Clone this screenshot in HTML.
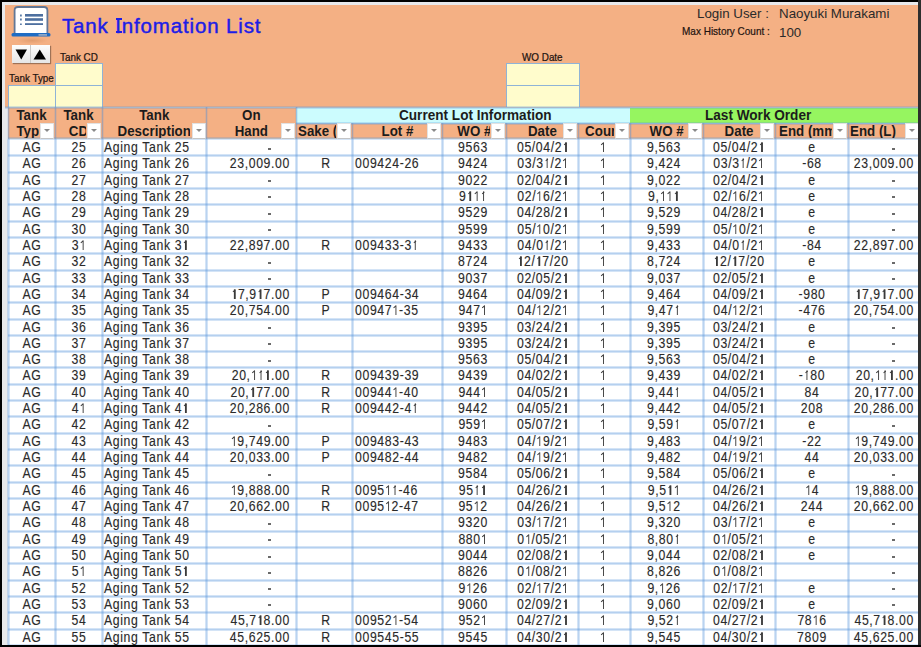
<!DOCTYPE html><html><head><meta charset="utf-8"><style>

*{margin:0;padding:0;box-sizing:border-box}
html,body{width:921px;height:647px;overflow:hidden;background:#000}
body{position:relative;font-family:"Liberation Sans",sans-serif;color:#222}
.a{position:absolute}
.t{position:absolute;white-space:pre;font-size:13.33px;line-height:15px;height:15px;transform:scaleY(1.06);transform-origin:0 12px}
.d{letter-spacing:.68px;transform:scale(.92,1.07);color:#2a2a2a;text-shadow:0 0 .8px rgba(60,60,80,.25)}
.one{display:inline-block;width:7.41px;height:9.6px;position:relative}.one:before{content:'';position:absolute;left:3.4px;top:0.3px;width:1.3px;height:9.7px;background:#3a3a3a}.one:after{content:'';position:absolute;left:0.9px;top:0.4px;width:3.3px;height:1.25px;background:#3a3a3a;transform:rotate(-36deg);transform-origin:100% 0}
.d.l{transform-origin:0 12px}.d.c{transform-origin:50% 12px}.d.r{transform-origin:100% 12px}
.b{font-weight:bold;color:#1c1c1c;transform:scaleY(1.03)}
.c{text-align:center}
.rt{text-align:right}
.vl{position:absolute;width:1px;background:rgba(90,150,220,.42);box-shadow:-1px 0 0 rgba(90,150,220,.26),1px 0 0 rgba(90,150,220,.26)}
.hl{position:absolute;height:1px;background:rgba(90,150,220,.45);box-shadow:0 -1px 0 rgba(90,150,220,.26),0 1px 0 rgba(90,150,220,.26)}
.dd{position:absolute;width:14px;background:#fff;border:1px solid #e2e2e2;border-bottom-color:#c4c4c4}
.dd:after{content:"";position:absolute;left:3px;top:5px;border-left:3px solid transparent;border-right:3px solid transparent;border-top:3px solid #8a8a8a}

</style></head><body><div id="w" style="position:absolute;left:0;top:0;width:921px;height:647px">
<div class="a" style="left:2px;top:2px;width:916px;height:643px;background:#e8e9eb"></div>
<div class="a" style="left:5px;top:5px;width:913px;height:102px;background:#f4b084"></div>
<div class="a" style="left:8px;top:139px;width:910px;height:506px;background:#fff"></div>
<div class="a" style="left:16px;top:37px;width:32px;height:7px;background:radial-gradient(ellipse at center,rgba(160,90,40,.22),rgba(160,90,40,0) 70%)"></div>
<svg class="a" style="left:10px;top:4px" width="44" height="40" viewBox="0 0 44 40">
<path d="M4.6 29.5 V6.5 Q4.6 3 8 3 H34 Q37.4 3 37.4 6.5 V29.5" fill="#fff" stroke="#627796" stroke-width="1.8"/>
<rect x="10" y="10.5" width="1.8" height="2" fill="#5b7da8"/>
<rect x="10" y="14.5" width="1.8" height="2" fill="#5b7da8"/>
<rect x="10" y="19.5" width="1.8" height="1.5" fill="#5b7da8"/>
<rect x="15" y="10" width="18" height="2.6" fill="#4d6f9f"/>
<rect x="15" y="14.2" width="18" height="2.6" fill="#4d6f9f"/>
<rect x="15" y="19.2" width="18" height="1.8" fill="#4d6f9f"/>
<rect x="1.5" y="29" width="39" height="3.6" rx="1.5" fill="#1f6cc4"/>
<rect x="28.5" y="30" width="8.5" height="1.8" fill="#8ea6c4"/>
</svg>
<div class="a" style="left:62px;top:14px;font-size:20.5px;line-height:24px;font-weight:normal;letter-spacing:0.85px;-webkit-text-stroke:0.45px #1d1de6;color:#1d1de6;white-space:pre">Tank Infomation List</div>
<div class="a" style="left:116.3px;top:18.2px;width:5.6px;height:1.7px;background:#1d1de6"></div><div class="a" style="left:116.3px;top:31.3px;width:5.6px;height:1.7px;background:#1d1de6"></div>
<div class="a" style="left:697px;top:5.7px;font-size:13.33px;line-height:15px;color:#2a2a2a;white-space:pre">Login User :</div>
<div class="a" style="left:779px;top:5.7px;font-size:13.33px;line-height:15px;color:#2a2a2a;white-space:pre">Naoyuki Murakami</div>
<div class="a" style="left:682px;top:26px;font-size:10px;line-height:12px;color:#1f1410;-webkit-text-stroke:0.2px #1f1410;white-space:pre;transform:scaleY(1.12);transform-origin:0 10px">Max History Count :</div>
<div class="a" style="left:779px;top:25px;font-size:13.33px;line-height:15px;color:#2a2a2a;white-space:pre">100</div>
<div class="a" style="left:12px;top:45px;width:38px;height:18px;background:linear-gradient(#fdfdfd,#e6e6e6);box-shadow:1px 1px 1px rgba(0,0,0,.35)"></div>
<div class="a" style="left:30px;top:45px;width:1px;height:18px;background:#c9c9c9"></div>
<svg class="a" style="left:11px;top:45px" width="40" height="19" viewBox="0 0 40 19"><path d="M4.5 4.5 H16 L10.25 14.5 Z" fill="#000"/><path d="M22.5 14.5 H35 L28.75 4.5 Z" fill="#000"/></svg>
<div class="a" style="left:60px;top:51.6px;font-size:9.9px;line-height:12px;color:#1f1410;-webkit-text-stroke:0.22px #1f1410;white-space:pre;transform:scaleY(1.12);transform-origin:0 9.4px">Tank CD</div>
<div class="a" style="left:9px;top:72.6px;font-size:9.9px;line-height:12px;color:#1f1410;-webkit-text-stroke:0.22px #1f1410;white-space:pre;transform:scaleY(1.12);transform-origin:0 9.4px">Tank Type</div>
<div class="a" style="left:522px;top:51.6px;font-size:9.9px;line-height:12px;color:#1f1410;-webkit-text-stroke:0.22px #1f1410;white-space:pre;transform:scaleY(1.12);transform-origin:0 9.4px">WO Date</div>
<div class="a" style="left:55px;top:63px;width:48px;height:23px;background:#fffccc;border:1px solid #8fb3d6"></div>
<div class="a" style="left:55px;top:85px;width:48px;height:23px;background:#fffccc;border:1px solid #8fb3d6"></div>
<div class="a" style="left:8px;top:85px;width:48px;height:23px;background:#fffccc;border:1px solid #8fb3d6"></div>
<div class="a" style="left:506px;top:63px;width:74px;height:23px;background:#fffccc;border:1px solid #8fb3d6"></div>
<div class="a" style="left:506px;top:85px;width:74px;height:23px;background:#fffccc;border:1px solid #8fb3d6"></div>
<div class="a" style="left:8px;top:107px;width:47px;height:32px;background:#f4b084"></div>
<div class="a" style="left:55px;top:107px;width:47px;height:32px;background:#f4b084"></div>
<div class="a" style="left:102px;top:107px;width:104px;height:32px;background:#f4b084"></div>
<div class="a" style="left:206px;top:107px;width:90px;height:32px;background:#f4b084"></div>
<div class="a" style="left:296px;top:107px;width:334px;height:16px;background:#ccfcfe"></div>
<div class="a" style="left:630px;top:107px;width:290px;height:16px;background:#96f560"></div>
<div class="a" style="left:296px;top:123px;width:56px;height:16px;background:#f4b084"></div>
<div class="a" style="left:352px;top:123px;width:90px;height:16px;background:#f4b084"></div>
<div class="a" style="left:442px;top:123px;width:64px;height:16px;background:#f4b084"></div>
<div class="a" style="left:506px;top:123px;width:72px;height:16px;background:#f4b084"></div>
<div class="a" style="left:578px;top:123px;width:52px;height:16px;background:#f4b084"></div>
<div class="a" style="left:630px;top:123px;width:73px;height:16px;background:#f4b084"></div>
<div class="a" style="left:703px;top:123px;width:72px;height:16px;background:#f4b084"></div>
<div class="a" style="left:775px;top:123px;width:73px;height:16px;background:#f4b084"></div>
<div class="a" style="left:848px;top:123px;width:72px;height:16px;background:#f4b084"></div>
<div class="hl" style="left:5px;top:107px;width:913px;background:#a9b7c8"></div>
<div class="hl" style="left:296px;top:123px;width:622px;background:#8fb3d6"></div>
<div class="hl" style="left:8px;top:138px;width:910px;background:#b5b8bd"></div>
<div class="dd" style="left:40px;top:123px;height:16px"></div>
<div class="dd" style="left:87px;top:123px;height:16px"></div>
<div class="dd" style="left:192px;top:123px;height:16px"></div>
<div class="dd" style="left:281px;top:123px;height:16px"></div>
<div class="dd" style="left:337px;top:123px;height:16px"></div>
<div class="dd" style="left:427px;top:123px;height:16px"></div>
<div class="dd" style="left:491px;top:123px;height:16px"></div>
<div class="dd" style="left:563px;top:123px;height:16px"></div>
<div class="dd" style="left:615px;top:123px;height:16px"></div>
<div class="dd" style="left:688px;top:123px;height:16px"></div>
<div class="dd" style="left:760px;top:123px;height:16px"></div>
<div class="dd" style="left:833px;top:123px;height:16px"></div>
<div class="dd" style="left:905px;top:123px;height:16px"></div>
<div class="t b" style="left:-68.50px;top:107.70px;width:200.00px;text-align:center;">Tank</div>
<div class="a" style="left:9px;top:123px;width:30px;height:15px;overflow:hidden">
<div class="t b" style="left:-77.50px;top:0.80px;width:200px;text-align:center">Type</div></div>
<div class="t b" style="left:-21.50px;top:107.70px;width:200.00px;text-align:center;">Tank</div>
<div class="a" style="left:56px;top:123px;width:30px;height:15px;overflow:hidden">
<div class="t b" style="left:-77.50px;top:0.80px;width:200px;text-align:center">CD</div></div>
<div class="t b" style="left:54.25px;top:107.70px;width:200.00px;text-align:center;">Tank</div>
<div class="a" style="left:103px;top:123px;width:87px;height:15px;overflow:hidden">
<div class="t b" style="left:-48.75px;top:0.80px;width:200px;text-align:center">Description</div></div>
<div class="t b" style="left:151.35px;top:107.70px;width:200.00px;text-align:center;">On</div>
<div class="a" style="left:207px;top:123px;width:73px;height:15px;overflow:hidden">
<div class="t b" style="left:-55.65px;top:0.80px;width:200px;text-align:center">Hand</div></div>
<div class="t b" style="left:399px;top:107.7px;font-size:13.6px">Current Lot Information</div>
<div class="t b" style="left:705px;top:107.7px;font-size:13.6px">Last Work Order</div>
<div class="a" style="left:297px;top:123px;width:39px;height:15px;overflow:hidden">
<div class="t b" style="left:1.00px;top:0.80px">Sake (Class)</div></div>
<div class="a" style="left:353px;top:123px;width:73px;height:15px;overflow:hidden">
<div class="t b" style="left:-55.60px;top:0.80px;width:200px;text-align:center">Lot #</div></div>
<div class="a" style="left:443px;top:123px;width:47px;height:15px;overflow:hidden">
<div class="t b" style="left:-68.65px;top:0.80px;width:200px;text-align:center">WO #</div></div>
<div class="a" style="left:507px;top:123px;width:55px;height:15px;overflow:hidden">
<div class="t b" style="left:-64.65px;top:0.80px;width:200px;text-align:center">Date</div></div>
<div class="a" style="left:579px;top:123px;width:35px;height:15px;overflow:hidden">
<div class="t b" style="left:-74.65px;top:0.80px;width:200px;text-align:center">Count</div></div>
<div class="a" style="left:631px;top:123px;width:56px;height:15px;overflow:hidden">
<div class="t b" style="left:-64.40px;top:0.80px;width:200px;text-align:center">WO #</div></div>
<div class="a" style="left:704px;top:123px;width:55px;height:15px;overflow:hidden">
<div class="t b" style="left:-64.95px;top:0.80px;width:200px;text-align:center">Date</div></div>
<div class="a" style="left:776px;top:123px;width:56px;height:15px;overflow:hidden">
<div class="t b" style="left:3.00px;top:0.80px">End (mm)</div></div>
<div class="a" style="left:849px;top:123px;width:55px;height:15px;overflow:hidden">
<div class="t b" style="left:1.00px;top:0.80px">End (L)</div></div>
<div class="hl" style="left:8px;top:155px;width:910px"></div>
<div class="hl" style="left:8px;top:172px;width:910px"></div>
<div class="hl" style="left:8px;top:188px;width:910px"></div>
<div class="hl" style="left:8px;top:204px;width:910px"></div>
<div class="hl" style="left:8px;top:221px;width:910px"></div>
<div class="hl" style="left:8px;top:237px;width:910px"></div>
<div class="hl" style="left:8px;top:253px;width:910px"></div>
<div class="hl" style="left:8px;top:270px;width:910px"></div>
<div class="hl" style="left:8px;top:286px;width:910px"></div>
<div class="hl" style="left:8px;top:302px;width:910px"></div>
<div class="hl" style="left:8px;top:319px;width:910px"></div>
<div class="hl" style="left:8px;top:335px;width:910px"></div>
<div class="hl" style="left:8px;top:351px;width:910px"></div>
<div class="hl" style="left:8px;top:367px;width:910px"></div>
<div class="hl" style="left:8px;top:384px;width:910px"></div>
<div class="hl" style="left:8px;top:400px;width:910px"></div>
<div class="hl" style="left:8px;top:416px;width:910px"></div>
<div class="hl" style="left:8px;top:433px;width:910px"></div>
<div class="hl" style="left:8px;top:449px;width:910px"></div>
<div class="hl" style="left:8px;top:465px;width:910px"></div>
<div class="hl" style="left:8px;top:482px;width:910px"></div>
<div class="hl" style="left:8px;top:498px;width:910px"></div>
<div class="hl" style="left:8px;top:514px;width:910px"></div>
<div class="hl" style="left:8px;top:531px;width:910px"></div>
<div class="hl" style="left:8px;top:547px;width:910px"></div>
<div class="hl" style="left:8px;top:563px;width:910px"></div>
<div class="hl" style="left:8px;top:580px;width:910px"></div>
<div class="hl" style="left:8px;top:596px;width:910px"></div>
<div class="hl" style="left:8px;top:612px;width:910px"></div>
<div class="hl" style="left:8px;top:629px;width:910px"></div>
<div class="hl" style="left:8px;top:645px;width:910px"></div>
<div class="vl" style="left:8px;top:139px;height:506px"></div>
<div class="vl" style="left:55px;top:139px;height:506px"></div>
<div class="vl" style="left:102px;top:139px;height:506px"></div>
<div class="vl" style="left:206px;top:139px;height:506px"></div>
<div class="vl" style="left:296px;top:139px;height:506px"></div>
<div class="vl" style="left:352px;top:139px;height:506px"></div>
<div class="vl" style="left:442px;top:139px;height:506px"></div>
<div class="vl" style="left:506px;top:139px;height:506px"></div>
<div class="vl" style="left:578px;top:139px;height:506px"></div>
<div class="vl" style="left:630px;top:139px;height:506px"></div>
<div class="vl" style="left:703px;top:139px;height:506px"></div>
<div class="vl" style="left:775px;top:139px;height:506px"></div>
<div class="vl" style="left:848px;top:139px;height:506px"></div>
<div class="vl" style="left:8px;top:107px;height:32px;background:rgba(110,150,200,.55);box-shadow:-1px 0 0 rgba(110,150,200,.15),1px 0 0 rgba(110,150,200,.15)"></div>
<div class="vl" style="left:55px;top:107px;height:32px;background:rgba(110,150,200,.55);box-shadow:-1px 0 0 rgba(110,150,200,.15),1px 0 0 rgba(110,150,200,.15)"></div>
<div class="vl" style="left:102px;top:107px;height:32px;background:rgba(110,150,200,.55);box-shadow:-1px 0 0 rgba(110,150,200,.15),1px 0 0 rgba(110,150,200,.15)"></div>
<div class="vl" style="left:206px;top:107px;height:32px;background:rgba(110,150,200,.55);box-shadow:-1px 0 0 rgba(110,150,200,.15),1px 0 0 rgba(110,150,200,.15)"></div>
<div class="vl" style="left:296px;top:107px;height:32px;background:rgba(110,150,200,.55);box-shadow:-1px 0 0 rgba(110,150,200,.15),1px 0 0 rgba(110,150,200,.15)"></div>
<div class="vl" style="left:352px;top:123px;height:16px;background:rgba(110,150,200,.55);box-shadow:-1px 0 0 rgba(110,150,200,.15),1px 0 0 rgba(110,150,200,.15)"></div>
<div class="vl" style="left:442px;top:123px;height:16px;background:rgba(110,150,200,.55);box-shadow:-1px 0 0 rgba(110,150,200,.15),1px 0 0 rgba(110,150,200,.15)"></div>
<div class="vl" style="left:506px;top:123px;height:16px;background:rgba(110,150,200,.55);box-shadow:-1px 0 0 rgba(110,150,200,.15),1px 0 0 rgba(110,150,200,.15)"></div>
<div class="vl" style="left:578px;top:123px;height:16px;background:rgba(110,150,200,.55);box-shadow:-1px 0 0 rgba(110,150,200,.15),1px 0 0 rgba(110,150,200,.15)"></div>
<div class="vl" style="left:630px;top:123px;height:16px;background:rgba(110,150,200,.55);box-shadow:-1px 0 0 rgba(110,150,200,.15),1px 0 0 rgba(110,150,200,.15)"></div>
<div class="vl" style="left:703px;top:123px;height:16px;background:rgba(110,150,200,.55);box-shadow:-1px 0 0 rgba(110,150,200,.15),1px 0 0 rgba(110,150,200,.15)"></div>
<div class="vl" style="left:775px;top:123px;height:16px;background:rgba(110,150,200,.55);box-shadow:-1px 0 0 rgba(110,150,200,.15),1px 0 0 rgba(110,150,200,.15)"></div>
<div class="vl" style="left:848px;top:123px;height:16px;background:rgba(110,150,200,.55);box-shadow:-1px 0 0 rgba(110,150,200,.15),1px 0 0 rgba(110,150,200,.15)"></div>
<div class="t d c" style="left:-68.16px;top:140.00px;width:200px;text-align:center">AG</div>
<div class="t d c" style="left:-21.16px;top:140.00px;width:200px;text-align:center">25</div>
<div class="t d l" style="left:104.00px;top:140.00px">Aging Tank 25</div>
<div class="a" style="left:268px;top:148px;width:3px;height:2px;background:#6a6a6a"></div>
<div class="t d c" style="left:372.74px;top:140.00px;width:200px;text-align:center">9563</div>
<div class="t d c" style="left:442.74px;top:140.00px;width:200px;text-align:center">05/04/2<span class="one"></span></div>
<div class="t d c" style="left:503.04px;top:140.00px;width:200px;text-align:center"><span class="one"></span></div>
<div class="t d c" style="left:564.04px;top:140.00px;width:200px;text-align:center">9,563</div>
<div class="t d c" style="left:638.84px;top:140.00px;width:200px;text-align:center">05/04/2<span class="one"></span></div>
<div class="t d c" style="left:712.34px;top:140.00px;width:200px;text-align:center">e</div>
<div class="a" style="left:892px;top:148px;width:3px;height:2px;background:#6a6a6a"></div>
<div class="t d c" style="left:-68.16px;top:156.32px;width:200px;text-align:center">AG</div>
<div class="t d c" style="left:-21.16px;top:156.32px;width:200px;text-align:center">26</div>
<div class="t d l" style="left:104.00px;top:156.32px">Aging Tank 26</div>
<div class="t d r" style="left:190.28px;top:156.32px;width:100px;text-align:right">23,009.00</div>
<div class="t d c" style="left:225.54px;top:156.32px;width:200px;text-align:center">R</div>
<div class="t d l" style="left:354.50px;top:156.32px">009424-26</div>
<div class="t d c" style="left:372.74px;top:156.32px;width:200px;text-align:center">9424</div>
<div class="t d c" style="left:442.74px;top:156.32px;width:200px;text-align:center">03/3<span class="one"></span>/2<span class="one"></span></div>
<div class="t d c" style="left:503.04px;top:156.32px;width:200px;text-align:center"><span class="one"></span></div>
<div class="t d c" style="left:564.04px;top:156.32px;width:200px;text-align:center">9,424</div>
<div class="t d c" style="left:638.84px;top:156.32px;width:200px;text-align:center">03/3<span class="one"></span>/2<span class="one"></span></div>
<div class="t d c" style="left:712.34px;top:156.32px;width:200px;text-align:center">-68</div>
<div class="t d r" style="left:814.18px;top:156.32px;width:100px;text-align:right">23,009.00</div>
<div class="t d c" style="left:-68.16px;top:172.64px;width:200px;text-align:center">AG</div>
<div class="t d c" style="left:-21.16px;top:172.64px;width:200px;text-align:center">27</div>
<div class="t d l" style="left:104.00px;top:172.64px">Aging Tank 27</div>
<div class="a" style="left:268px;top:180px;width:3px;height:2px;background:#6a6a6a"></div>
<div class="t d c" style="left:372.74px;top:172.64px;width:200px;text-align:center">9022</div>
<div class="t d c" style="left:442.74px;top:172.64px;width:200px;text-align:center">02/04/2<span class="one"></span></div>
<div class="t d c" style="left:503.04px;top:172.64px;width:200px;text-align:center"><span class="one"></span></div>
<div class="t d c" style="left:564.04px;top:172.64px;width:200px;text-align:center">9,022</div>
<div class="t d c" style="left:638.84px;top:172.64px;width:200px;text-align:center">02/04/2<span class="one"></span></div>
<div class="t d c" style="left:712.34px;top:172.64px;width:200px;text-align:center">e</div>
<div class="a" style="left:892px;top:180px;width:3px;height:2px;background:#6a6a6a"></div>
<div class="t d c" style="left:-68.16px;top:188.96px;width:200px;text-align:center">AG</div>
<div class="t d c" style="left:-21.16px;top:188.96px;width:200px;text-align:center">28</div>
<div class="t d l" style="left:104.00px;top:188.96px">Aging Tank 28</div>
<div class="a" style="left:268px;top:196px;width:3px;height:2px;background:#6a6a6a"></div>
<div class="t d c" style="left:372.74px;top:188.96px;width:200px;text-align:center">9<span class="one"></span><span class="one"></span><span class="one"></span></div>
<div class="t d c" style="left:442.74px;top:188.96px;width:200px;text-align:center">02/<span class="one"></span>6/2<span class="one"></span></div>
<div class="t d c" style="left:503.04px;top:188.96px;width:200px;text-align:center"><span class="one"></span></div>
<div class="t d c" style="left:564.04px;top:188.96px;width:200px;text-align:center">9,<span class="one"></span><span class="one"></span><span class="one"></span></div>
<div class="t d c" style="left:638.84px;top:188.96px;width:200px;text-align:center">02/<span class="one"></span>6/2<span class="one"></span></div>
<div class="t d c" style="left:712.34px;top:188.96px;width:200px;text-align:center">e</div>
<div class="a" style="left:892px;top:196px;width:3px;height:2px;background:#6a6a6a"></div>
<div class="t d c" style="left:-68.16px;top:205.28px;width:200px;text-align:center">AG</div>
<div class="t d c" style="left:-21.16px;top:205.28px;width:200px;text-align:center">29</div>
<div class="t d l" style="left:104.00px;top:205.28px">Aging Tank 29</div>
<div class="a" style="left:268px;top:213px;width:3px;height:2px;background:#6a6a6a"></div>
<div class="t d c" style="left:372.74px;top:205.28px;width:200px;text-align:center">9529</div>
<div class="t d c" style="left:442.74px;top:205.28px;width:200px;text-align:center">04/28/2<span class="one"></span></div>
<div class="t d c" style="left:503.04px;top:205.28px;width:200px;text-align:center"><span class="one"></span></div>
<div class="t d c" style="left:564.04px;top:205.28px;width:200px;text-align:center">9,529</div>
<div class="t d c" style="left:638.84px;top:205.28px;width:200px;text-align:center">04/28/2<span class="one"></span></div>
<div class="t d c" style="left:712.34px;top:205.28px;width:200px;text-align:center">e</div>
<div class="a" style="left:892px;top:213px;width:3px;height:2px;background:#6a6a6a"></div>
<div class="t d c" style="left:-68.16px;top:221.60px;width:200px;text-align:center">AG</div>
<div class="t d c" style="left:-21.16px;top:221.60px;width:200px;text-align:center">30</div>
<div class="t d l" style="left:104.00px;top:221.60px">Aging Tank 30</div>
<div class="a" style="left:268px;top:229px;width:3px;height:2px;background:#6a6a6a"></div>
<div class="t d c" style="left:372.74px;top:221.60px;width:200px;text-align:center">9599</div>
<div class="t d c" style="left:442.74px;top:221.60px;width:200px;text-align:center">05/<span class="one"></span>0/2<span class="one"></span></div>
<div class="t d c" style="left:503.04px;top:221.60px;width:200px;text-align:center"><span class="one"></span></div>
<div class="t d c" style="left:564.04px;top:221.60px;width:200px;text-align:center">9,599</div>
<div class="t d c" style="left:638.84px;top:221.60px;width:200px;text-align:center">05/<span class="one"></span>0/2<span class="one"></span></div>
<div class="t d c" style="left:712.34px;top:221.60px;width:200px;text-align:center">e</div>
<div class="a" style="left:892px;top:229px;width:3px;height:2px;background:#6a6a6a"></div>
<div class="t d c" style="left:-68.16px;top:237.92px;width:200px;text-align:center">AG</div>
<div class="t d c" style="left:-21.16px;top:237.92px;width:200px;text-align:center">3<span class="one"></span></div>
<div class="t d l" style="left:104.00px;top:237.92px">Aging Tank 3<span class="one"></span></div>
<div class="t d r" style="left:190.28px;top:237.92px;width:100px;text-align:right">22,897.00</div>
<div class="t d c" style="left:225.54px;top:237.92px;width:200px;text-align:center">R</div>
<div class="t d l" style="left:354.50px;top:237.92px">009433-3<span class="one"></span></div>
<div class="t d c" style="left:372.74px;top:237.92px;width:200px;text-align:center">9433</div>
<div class="t d c" style="left:442.74px;top:237.92px;width:200px;text-align:center">04/0<span class="one"></span>/2<span class="one"></span></div>
<div class="t d c" style="left:503.04px;top:237.92px;width:200px;text-align:center"><span class="one"></span></div>
<div class="t d c" style="left:564.04px;top:237.92px;width:200px;text-align:center">9,433</div>
<div class="t d c" style="left:638.84px;top:237.92px;width:200px;text-align:center">04/0<span class="one"></span>/2<span class="one"></span></div>
<div class="t d c" style="left:712.34px;top:237.92px;width:200px;text-align:center">-84</div>
<div class="t d r" style="left:814.18px;top:237.92px;width:100px;text-align:right">22,897.00</div>
<div class="t d c" style="left:-68.16px;top:254.24px;width:200px;text-align:center">AG</div>
<div class="t d c" style="left:-21.16px;top:254.24px;width:200px;text-align:center">32</div>
<div class="t d l" style="left:104.00px;top:254.24px">Aging Tank 32</div>
<div class="a" style="left:268px;top:262px;width:3px;height:2px;background:#6a6a6a"></div>
<div class="t d c" style="left:372.74px;top:254.24px;width:200px;text-align:center">8724</div>
<div class="t d c" style="left:442.74px;top:254.24px;width:200px;text-align:center"><span class="one"></span>2/<span class="one"></span>7/20</div>
<div class="t d c" style="left:503.04px;top:254.24px;width:200px;text-align:center"><span class="one"></span></div>
<div class="t d c" style="left:564.04px;top:254.24px;width:200px;text-align:center">8,724</div>
<div class="t d c" style="left:638.84px;top:254.24px;width:200px;text-align:center"><span class="one"></span>2/<span class="one"></span>7/20</div>
<div class="t d c" style="left:712.34px;top:254.24px;width:200px;text-align:center">e</div>
<div class="a" style="left:892px;top:262px;width:3px;height:2px;background:#6a6a6a"></div>
<div class="t d c" style="left:-68.16px;top:270.56px;width:200px;text-align:center">AG</div>
<div class="t d c" style="left:-21.16px;top:270.56px;width:200px;text-align:center">33</div>
<div class="t d l" style="left:104.00px;top:270.56px">Aging Tank 33</div>
<div class="a" style="left:268px;top:278px;width:3px;height:2px;background:#6a6a6a"></div>
<div class="t d c" style="left:372.74px;top:270.56px;width:200px;text-align:center">9037</div>
<div class="t d c" style="left:442.74px;top:270.56px;width:200px;text-align:center">02/05/2<span class="one"></span></div>
<div class="t d c" style="left:503.04px;top:270.56px;width:200px;text-align:center"><span class="one"></span></div>
<div class="t d c" style="left:564.04px;top:270.56px;width:200px;text-align:center">9,037</div>
<div class="t d c" style="left:638.84px;top:270.56px;width:200px;text-align:center">02/05/2<span class="one"></span></div>
<div class="t d c" style="left:712.34px;top:270.56px;width:200px;text-align:center">e</div>
<div class="a" style="left:892px;top:278px;width:3px;height:2px;background:#6a6a6a"></div>
<div class="t d c" style="left:-68.16px;top:286.88px;width:200px;text-align:center">AG</div>
<div class="t d c" style="left:-21.16px;top:286.88px;width:200px;text-align:center">34</div>
<div class="t d l" style="left:104.00px;top:286.88px">Aging Tank 34</div>
<div class="t d r" style="left:190.28px;top:286.88px;width:100px;text-align:right"><span class="one"></span>7,9<span class="one"></span>7.00</div>
<div class="t d c" style="left:225.54px;top:286.88px;width:200px;text-align:center">P</div>
<div class="t d l" style="left:354.50px;top:286.88px">009464-34</div>
<div class="t d c" style="left:372.74px;top:286.88px;width:200px;text-align:center">9464</div>
<div class="t d c" style="left:442.74px;top:286.88px;width:200px;text-align:center">04/09/2<span class="one"></span></div>
<div class="t d c" style="left:503.04px;top:286.88px;width:200px;text-align:center"><span class="one"></span></div>
<div class="t d c" style="left:564.04px;top:286.88px;width:200px;text-align:center">9,464</div>
<div class="t d c" style="left:638.84px;top:286.88px;width:200px;text-align:center">04/09/2<span class="one"></span></div>
<div class="t d c" style="left:712.34px;top:286.88px;width:200px;text-align:center">-980</div>
<div class="t d r" style="left:814.18px;top:286.88px;width:100px;text-align:right"><span class="one"></span>7,9<span class="one"></span>7.00</div>
<div class="t d c" style="left:-68.16px;top:303.20px;width:200px;text-align:center">AG</div>
<div class="t d c" style="left:-21.16px;top:303.20px;width:200px;text-align:center">35</div>
<div class="t d l" style="left:104.00px;top:303.20px">Aging Tank 35</div>
<div class="t d r" style="left:190.28px;top:303.20px;width:100px;text-align:right">20,754.00</div>
<div class="t d c" style="left:225.54px;top:303.20px;width:200px;text-align:center">P</div>
<div class="t d l" style="left:354.50px;top:303.20px">00947<span class="one"></span>-35</div>
<div class="t d c" style="left:372.74px;top:303.20px;width:200px;text-align:center">947<span class="one"></span></div>
<div class="t d c" style="left:442.74px;top:303.20px;width:200px;text-align:center">04/<span class="one"></span>2/2<span class="one"></span></div>
<div class="t d c" style="left:503.04px;top:303.20px;width:200px;text-align:center"><span class="one"></span></div>
<div class="t d c" style="left:564.04px;top:303.20px;width:200px;text-align:center">9,47<span class="one"></span></div>
<div class="t d c" style="left:638.84px;top:303.20px;width:200px;text-align:center">04/<span class="one"></span>2/2<span class="one"></span></div>
<div class="t d c" style="left:712.34px;top:303.20px;width:200px;text-align:center">-476</div>
<div class="t d r" style="left:814.18px;top:303.20px;width:100px;text-align:right">20,754.00</div>
<div class="t d c" style="left:-68.16px;top:319.52px;width:200px;text-align:center">AG</div>
<div class="t d c" style="left:-21.16px;top:319.52px;width:200px;text-align:center">36</div>
<div class="t d l" style="left:104.00px;top:319.52px">Aging Tank 36</div>
<div class="a" style="left:268px;top:327px;width:3px;height:2px;background:#6a6a6a"></div>
<div class="t d c" style="left:372.74px;top:319.52px;width:200px;text-align:center">9395</div>
<div class="t d c" style="left:442.74px;top:319.52px;width:200px;text-align:center">03/24/2<span class="one"></span></div>
<div class="t d c" style="left:503.04px;top:319.52px;width:200px;text-align:center"><span class="one"></span></div>
<div class="t d c" style="left:564.04px;top:319.52px;width:200px;text-align:center">9,395</div>
<div class="t d c" style="left:638.84px;top:319.52px;width:200px;text-align:center">03/24/2<span class="one"></span></div>
<div class="t d c" style="left:712.34px;top:319.52px;width:200px;text-align:center">e</div>
<div class="a" style="left:892px;top:327px;width:3px;height:2px;background:#6a6a6a"></div>
<div class="t d c" style="left:-68.16px;top:335.84px;width:200px;text-align:center">AG</div>
<div class="t d c" style="left:-21.16px;top:335.84px;width:200px;text-align:center">37</div>
<div class="t d l" style="left:104.00px;top:335.84px">Aging Tank 37</div>
<div class="a" style="left:268px;top:343px;width:3px;height:2px;background:#6a6a6a"></div>
<div class="t d c" style="left:372.74px;top:335.84px;width:200px;text-align:center">9395</div>
<div class="t d c" style="left:442.74px;top:335.84px;width:200px;text-align:center">03/24/2<span class="one"></span></div>
<div class="t d c" style="left:503.04px;top:335.84px;width:200px;text-align:center"><span class="one"></span></div>
<div class="t d c" style="left:564.04px;top:335.84px;width:200px;text-align:center">9,395</div>
<div class="t d c" style="left:638.84px;top:335.84px;width:200px;text-align:center">03/24/2<span class="one"></span></div>
<div class="t d c" style="left:712.34px;top:335.84px;width:200px;text-align:center">e</div>
<div class="a" style="left:892px;top:343px;width:3px;height:2px;background:#6a6a6a"></div>
<div class="t d c" style="left:-68.16px;top:352.16px;width:200px;text-align:center">AG</div>
<div class="t d c" style="left:-21.16px;top:352.16px;width:200px;text-align:center">38</div>
<div class="t d l" style="left:104.00px;top:352.16px">Aging Tank 38</div>
<div class="a" style="left:268px;top:360px;width:3px;height:2px;background:#6a6a6a"></div>
<div class="t d c" style="left:372.74px;top:352.16px;width:200px;text-align:center">9563</div>
<div class="t d c" style="left:442.74px;top:352.16px;width:200px;text-align:center">05/04/2<span class="one"></span></div>
<div class="t d c" style="left:503.04px;top:352.16px;width:200px;text-align:center"><span class="one"></span></div>
<div class="t d c" style="left:564.04px;top:352.16px;width:200px;text-align:center">9,563</div>
<div class="t d c" style="left:638.84px;top:352.16px;width:200px;text-align:center">05/04/2<span class="one"></span></div>
<div class="t d c" style="left:712.34px;top:352.16px;width:200px;text-align:center">e</div>
<div class="a" style="left:892px;top:360px;width:3px;height:2px;background:#6a6a6a"></div>
<div class="t d c" style="left:-68.16px;top:368.48px;width:200px;text-align:center">AG</div>
<div class="t d c" style="left:-21.16px;top:368.48px;width:200px;text-align:center">39</div>
<div class="t d l" style="left:104.00px;top:368.48px">Aging Tank 39</div>
<div class="t d r" style="left:190.28px;top:368.48px;width:100px;text-align:right">20,<span class="one"></span><span class="one"></span><span class="one"></span>.00</div>
<div class="t d c" style="left:225.54px;top:368.48px;width:200px;text-align:center">R</div>
<div class="t d l" style="left:354.50px;top:368.48px">009439-39</div>
<div class="t d c" style="left:372.74px;top:368.48px;width:200px;text-align:center">9439</div>
<div class="t d c" style="left:442.74px;top:368.48px;width:200px;text-align:center">04/02/2<span class="one"></span></div>
<div class="t d c" style="left:503.04px;top:368.48px;width:200px;text-align:center"><span class="one"></span></div>
<div class="t d c" style="left:564.04px;top:368.48px;width:200px;text-align:center">9,439</div>
<div class="t d c" style="left:638.84px;top:368.48px;width:200px;text-align:center">04/02/2<span class="one"></span></div>
<div class="t d c" style="left:712.34px;top:368.48px;width:200px;text-align:center">-<span class="one"></span>80</div>
<div class="t d r" style="left:814.18px;top:368.48px;width:100px;text-align:right">20,<span class="one"></span><span class="one"></span><span class="one"></span>.00</div>
<div class="t d c" style="left:-68.16px;top:384.80px;width:200px;text-align:center">AG</div>
<div class="t d c" style="left:-21.16px;top:384.80px;width:200px;text-align:center">40</div>
<div class="t d l" style="left:104.00px;top:384.80px">Aging Tank 40</div>
<div class="t d r" style="left:190.28px;top:384.80px;width:100px;text-align:right">20,<span class="one"></span>77.00</div>
<div class="t d c" style="left:225.54px;top:384.80px;width:200px;text-align:center">R</div>
<div class="t d l" style="left:354.50px;top:384.80px">00944<span class="one"></span>-40</div>
<div class="t d c" style="left:372.74px;top:384.80px;width:200px;text-align:center">944<span class="one"></span></div>
<div class="t d c" style="left:442.74px;top:384.80px;width:200px;text-align:center">04/05/2<span class="one"></span></div>
<div class="t d c" style="left:503.04px;top:384.80px;width:200px;text-align:center"><span class="one"></span></div>
<div class="t d c" style="left:564.04px;top:384.80px;width:200px;text-align:center">9,44<span class="one"></span></div>
<div class="t d c" style="left:638.84px;top:384.80px;width:200px;text-align:center">04/05/2<span class="one"></span></div>
<div class="t d c" style="left:712.34px;top:384.80px;width:200px;text-align:center">84</div>
<div class="t d r" style="left:814.18px;top:384.80px;width:100px;text-align:right">20,<span class="one"></span>77.00</div>
<div class="t d c" style="left:-68.16px;top:401.12px;width:200px;text-align:center">AG</div>
<div class="t d c" style="left:-21.16px;top:401.12px;width:200px;text-align:center">4<span class="one"></span></div>
<div class="t d l" style="left:104.00px;top:401.12px">Aging Tank 4<span class="one"></span></div>
<div class="t d r" style="left:190.28px;top:401.12px;width:100px;text-align:right">20,286.00</div>
<div class="t d c" style="left:225.54px;top:401.12px;width:200px;text-align:center">R</div>
<div class="t d l" style="left:354.50px;top:401.12px">009442-4<span class="one"></span></div>
<div class="t d c" style="left:372.74px;top:401.12px;width:200px;text-align:center">9442</div>
<div class="t d c" style="left:442.74px;top:401.12px;width:200px;text-align:center">04/05/2<span class="one"></span></div>
<div class="t d c" style="left:503.04px;top:401.12px;width:200px;text-align:center"><span class="one"></span></div>
<div class="t d c" style="left:564.04px;top:401.12px;width:200px;text-align:center">9,442</div>
<div class="t d c" style="left:638.84px;top:401.12px;width:200px;text-align:center">04/05/2<span class="one"></span></div>
<div class="t d c" style="left:712.34px;top:401.12px;width:200px;text-align:center">208</div>
<div class="t d r" style="left:814.18px;top:401.12px;width:100px;text-align:right">20,286.00</div>
<div class="t d c" style="left:-68.16px;top:417.44px;width:200px;text-align:center">AG</div>
<div class="t d c" style="left:-21.16px;top:417.44px;width:200px;text-align:center">42</div>
<div class="t d l" style="left:104.00px;top:417.44px">Aging Tank 42</div>
<div class="a" style="left:268px;top:425px;width:3px;height:2px;background:#6a6a6a"></div>
<div class="t d c" style="left:372.74px;top:417.44px;width:200px;text-align:center">959<span class="one"></span></div>
<div class="t d c" style="left:442.74px;top:417.44px;width:200px;text-align:center">05/07/2<span class="one"></span></div>
<div class="t d c" style="left:503.04px;top:417.44px;width:200px;text-align:center"><span class="one"></span></div>
<div class="t d c" style="left:564.04px;top:417.44px;width:200px;text-align:center">9,59<span class="one"></span></div>
<div class="t d c" style="left:638.84px;top:417.44px;width:200px;text-align:center">05/07/2<span class="one"></span></div>
<div class="t d c" style="left:712.34px;top:417.44px;width:200px;text-align:center">e</div>
<div class="a" style="left:892px;top:425px;width:3px;height:2px;background:#6a6a6a"></div>
<div class="t d c" style="left:-68.16px;top:433.76px;width:200px;text-align:center">AG</div>
<div class="t d c" style="left:-21.16px;top:433.76px;width:200px;text-align:center">43</div>
<div class="t d l" style="left:104.00px;top:433.76px">Aging Tank 43</div>
<div class="t d r" style="left:190.28px;top:433.76px;width:100px;text-align:right"><span class="one"></span>9,749.00</div>
<div class="t d c" style="left:225.54px;top:433.76px;width:200px;text-align:center">P</div>
<div class="t d l" style="left:354.50px;top:433.76px">009483-43</div>
<div class="t d c" style="left:372.74px;top:433.76px;width:200px;text-align:center">9483</div>
<div class="t d c" style="left:442.74px;top:433.76px;width:200px;text-align:center">04/<span class="one"></span>9/2<span class="one"></span></div>
<div class="t d c" style="left:503.04px;top:433.76px;width:200px;text-align:center"><span class="one"></span></div>
<div class="t d c" style="left:564.04px;top:433.76px;width:200px;text-align:center">9,483</div>
<div class="t d c" style="left:638.84px;top:433.76px;width:200px;text-align:center">04/<span class="one"></span>9/2<span class="one"></span></div>
<div class="t d c" style="left:712.34px;top:433.76px;width:200px;text-align:center">-22</div>
<div class="t d r" style="left:814.18px;top:433.76px;width:100px;text-align:right"><span class="one"></span>9,749.00</div>
<div class="t d c" style="left:-68.16px;top:450.08px;width:200px;text-align:center">AG</div>
<div class="t d c" style="left:-21.16px;top:450.08px;width:200px;text-align:center">44</div>
<div class="t d l" style="left:104.00px;top:450.08px">Aging Tank 44</div>
<div class="t d r" style="left:190.28px;top:450.08px;width:100px;text-align:right">20,033.00</div>
<div class="t d c" style="left:225.54px;top:450.08px;width:200px;text-align:center">P</div>
<div class="t d l" style="left:354.50px;top:450.08px">009482-44</div>
<div class="t d c" style="left:372.74px;top:450.08px;width:200px;text-align:center">9482</div>
<div class="t d c" style="left:442.74px;top:450.08px;width:200px;text-align:center">04/<span class="one"></span>9/2<span class="one"></span></div>
<div class="t d c" style="left:503.04px;top:450.08px;width:200px;text-align:center"><span class="one"></span></div>
<div class="t d c" style="left:564.04px;top:450.08px;width:200px;text-align:center">9,482</div>
<div class="t d c" style="left:638.84px;top:450.08px;width:200px;text-align:center">04/<span class="one"></span>9/2<span class="one"></span></div>
<div class="t d c" style="left:712.34px;top:450.08px;width:200px;text-align:center">44</div>
<div class="t d r" style="left:814.18px;top:450.08px;width:100px;text-align:right">20,033.00</div>
<div class="t d c" style="left:-68.16px;top:466.40px;width:200px;text-align:center">AG</div>
<div class="t d c" style="left:-21.16px;top:466.40px;width:200px;text-align:center">45</div>
<div class="t d l" style="left:104.00px;top:466.40px">Aging Tank 45</div>
<div class="a" style="left:268px;top:474px;width:3px;height:2px;background:#6a6a6a"></div>
<div class="t d c" style="left:372.74px;top:466.40px;width:200px;text-align:center">9584</div>
<div class="t d c" style="left:442.74px;top:466.40px;width:200px;text-align:center">05/06/2<span class="one"></span></div>
<div class="t d c" style="left:503.04px;top:466.40px;width:200px;text-align:center"><span class="one"></span></div>
<div class="t d c" style="left:564.04px;top:466.40px;width:200px;text-align:center">9,584</div>
<div class="t d c" style="left:638.84px;top:466.40px;width:200px;text-align:center">05/06/2<span class="one"></span></div>
<div class="t d c" style="left:712.34px;top:466.40px;width:200px;text-align:center">e</div>
<div class="a" style="left:892px;top:474px;width:3px;height:2px;background:#6a6a6a"></div>
<div class="t d c" style="left:-68.16px;top:482.72px;width:200px;text-align:center">AG</div>
<div class="t d c" style="left:-21.16px;top:482.72px;width:200px;text-align:center">46</div>
<div class="t d l" style="left:104.00px;top:482.72px">Aging Tank 46</div>
<div class="t d r" style="left:190.28px;top:482.72px;width:100px;text-align:right"><span class="one"></span>9,888.00</div>
<div class="t d c" style="left:225.54px;top:482.72px;width:200px;text-align:center">R</div>
<div class="t d l" style="left:354.50px;top:482.72px">0095<span class="one"></span><span class="one"></span>-46</div>
<div class="t d c" style="left:372.74px;top:482.72px;width:200px;text-align:center">95<span class="one"></span><span class="one"></span></div>
<div class="t d c" style="left:442.74px;top:482.72px;width:200px;text-align:center">04/26/2<span class="one"></span></div>
<div class="t d c" style="left:503.04px;top:482.72px;width:200px;text-align:center"><span class="one"></span></div>
<div class="t d c" style="left:564.04px;top:482.72px;width:200px;text-align:center">9,5<span class="one"></span><span class="one"></span></div>
<div class="t d c" style="left:638.84px;top:482.72px;width:200px;text-align:center">04/26/2<span class="one"></span></div>
<div class="t d c" style="left:712.34px;top:482.72px;width:200px;text-align:center"><span class="one"></span>4</div>
<div class="t d r" style="left:814.18px;top:482.72px;width:100px;text-align:right"><span class="one"></span>9,888.00</div>
<div class="t d c" style="left:-68.16px;top:499.04px;width:200px;text-align:center">AG</div>
<div class="t d c" style="left:-21.16px;top:499.04px;width:200px;text-align:center">47</div>
<div class="t d l" style="left:104.00px;top:499.04px">Aging Tank 47</div>
<div class="t d r" style="left:190.28px;top:499.04px;width:100px;text-align:right">20,662.00</div>
<div class="t d c" style="left:225.54px;top:499.04px;width:200px;text-align:center">R</div>
<div class="t d l" style="left:354.50px;top:499.04px">0095<span class="one"></span>2-47</div>
<div class="t d c" style="left:372.74px;top:499.04px;width:200px;text-align:center">95<span class="one"></span>2</div>
<div class="t d c" style="left:442.74px;top:499.04px;width:200px;text-align:center">04/26/2<span class="one"></span></div>
<div class="t d c" style="left:503.04px;top:499.04px;width:200px;text-align:center"><span class="one"></span></div>
<div class="t d c" style="left:564.04px;top:499.04px;width:200px;text-align:center">9,5<span class="one"></span>2</div>
<div class="t d c" style="left:638.84px;top:499.04px;width:200px;text-align:center">04/26/2<span class="one"></span></div>
<div class="t d c" style="left:712.34px;top:499.04px;width:200px;text-align:center">244</div>
<div class="t d r" style="left:814.18px;top:499.04px;width:100px;text-align:right">20,662.00</div>
<div class="t d c" style="left:-68.16px;top:515.36px;width:200px;text-align:center">AG</div>
<div class="t d c" style="left:-21.16px;top:515.36px;width:200px;text-align:center">48</div>
<div class="t d l" style="left:104.00px;top:515.36px">Aging Tank 48</div>
<div class="a" style="left:268px;top:523px;width:3px;height:2px;background:#6a6a6a"></div>
<div class="t d c" style="left:372.74px;top:515.36px;width:200px;text-align:center">9320</div>
<div class="t d c" style="left:442.74px;top:515.36px;width:200px;text-align:center">03/<span class="one"></span>7/2<span class="one"></span></div>
<div class="t d c" style="left:503.04px;top:515.36px;width:200px;text-align:center"><span class="one"></span></div>
<div class="t d c" style="left:564.04px;top:515.36px;width:200px;text-align:center">9,320</div>
<div class="t d c" style="left:638.84px;top:515.36px;width:200px;text-align:center">03/<span class="one"></span>7/2<span class="one"></span></div>
<div class="t d c" style="left:712.34px;top:515.36px;width:200px;text-align:center">e</div>
<div class="a" style="left:892px;top:523px;width:3px;height:2px;background:#6a6a6a"></div>
<div class="t d c" style="left:-68.16px;top:531.68px;width:200px;text-align:center">AG</div>
<div class="t d c" style="left:-21.16px;top:531.68px;width:200px;text-align:center">49</div>
<div class="t d l" style="left:104.00px;top:531.68px">Aging Tank 49</div>
<div class="a" style="left:268px;top:539px;width:3px;height:2px;background:#6a6a6a"></div>
<div class="t d c" style="left:372.74px;top:531.68px;width:200px;text-align:center">880<span class="one"></span></div>
<div class="t d c" style="left:442.74px;top:531.68px;width:200px;text-align:center">0<span class="one"></span>/05/2<span class="one"></span></div>
<div class="t d c" style="left:503.04px;top:531.68px;width:200px;text-align:center"><span class="one"></span></div>
<div class="t d c" style="left:564.04px;top:531.68px;width:200px;text-align:center">8,80<span class="one"></span></div>
<div class="t d c" style="left:638.84px;top:531.68px;width:200px;text-align:center">0<span class="one"></span>/05/2<span class="one"></span></div>
<div class="t d c" style="left:712.34px;top:531.68px;width:200px;text-align:center">e</div>
<div class="a" style="left:892px;top:539px;width:3px;height:2px;background:#6a6a6a"></div>
<div class="t d c" style="left:-68.16px;top:548.00px;width:200px;text-align:center">AG</div>
<div class="t d c" style="left:-21.16px;top:548.00px;width:200px;text-align:center">50</div>
<div class="t d l" style="left:104.00px;top:548.00px">Aging Tank 50</div>
<div class="a" style="left:268px;top:556px;width:3px;height:2px;background:#6a6a6a"></div>
<div class="t d c" style="left:372.74px;top:548.00px;width:200px;text-align:center">9044</div>
<div class="t d c" style="left:442.74px;top:548.00px;width:200px;text-align:center">02/08/2<span class="one"></span></div>
<div class="t d c" style="left:503.04px;top:548.00px;width:200px;text-align:center"><span class="one"></span></div>
<div class="t d c" style="left:564.04px;top:548.00px;width:200px;text-align:center">9,044</div>
<div class="t d c" style="left:638.84px;top:548.00px;width:200px;text-align:center">02/08/2<span class="one"></span></div>
<div class="t d c" style="left:712.34px;top:548.00px;width:200px;text-align:center">e</div>
<div class="a" style="left:892px;top:556px;width:3px;height:2px;background:#6a6a6a"></div>
<div class="t d c" style="left:-68.16px;top:564.32px;width:200px;text-align:center">AG</div>
<div class="t d c" style="left:-21.16px;top:564.32px;width:200px;text-align:center">5<span class="one"></span></div>
<div class="t d l" style="left:104.00px;top:564.32px">Aging Tank 5<span class="one"></span></div>
<div class="a" style="left:268px;top:572px;width:3px;height:2px;background:#6a6a6a"></div>
<div class="t d c" style="left:372.74px;top:564.32px;width:200px;text-align:center">8826</div>
<div class="t d c" style="left:442.74px;top:564.32px;width:200px;text-align:center">0<span class="one"></span>/08/2<span class="one"></span></div>
<div class="t d c" style="left:503.04px;top:564.32px;width:200px;text-align:center"><span class="one"></span></div>
<div class="t d c" style="left:564.04px;top:564.32px;width:200px;text-align:center">8,826</div>
<div class="t d c" style="left:638.84px;top:564.32px;width:200px;text-align:center">0<span class="one"></span>/08/2<span class="one"></span></div>
<div class="a" style="left:892px;top:572px;width:3px;height:2px;background:#6a6a6a"></div>
<div class="t d c" style="left:-68.16px;top:580.64px;width:200px;text-align:center">AG</div>
<div class="t d c" style="left:-21.16px;top:580.64px;width:200px;text-align:center">52</div>
<div class="t d l" style="left:104.00px;top:580.64px">Aging Tank 52</div>
<div class="a" style="left:268px;top:588px;width:3px;height:2px;background:#6a6a6a"></div>
<div class="t d c" style="left:372.74px;top:580.64px;width:200px;text-align:center">9<span class="one"></span>26</div>
<div class="t d c" style="left:442.74px;top:580.64px;width:200px;text-align:center">02/<span class="one"></span>7/2<span class="one"></span></div>
<div class="t d c" style="left:503.04px;top:580.64px;width:200px;text-align:center"><span class="one"></span></div>
<div class="t d c" style="left:564.04px;top:580.64px;width:200px;text-align:center">9,<span class="one"></span>26</div>
<div class="t d c" style="left:638.84px;top:580.64px;width:200px;text-align:center">02/<span class="one"></span>7/2<span class="one"></span></div>
<div class="t d c" style="left:712.34px;top:580.64px;width:200px;text-align:center">e</div>
<div class="a" style="left:892px;top:588px;width:3px;height:2px;background:#6a6a6a"></div>
<div class="t d c" style="left:-68.16px;top:596.96px;width:200px;text-align:center">AG</div>
<div class="t d c" style="left:-21.16px;top:596.96px;width:200px;text-align:center">53</div>
<div class="t d l" style="left:104.00px;top:596.96px">Aging Tank 53</div>
<div class="a" style="left:268px;top:604px;width:3px;height:2px;background:#6a6a6a"></div>
<div class="t d c" style="left:372.74px;top:596.96px;width:200px;text-align:center">9060</div>
<div class="t d c" style="left:442.74px;top:596.96px;width:200px;text-align:center">02/09/2<span class="one"></span></div>
<div class="t d c" style="left:503.04px;top:596.96px;width:200px;text-align:center"><span class="one"></span></div>
<div class="t d c" style="left:564.04px;top:596.96px;width:200px;text-align:center">9,060</div>
<div class="t d c" style="left:638.84px;top:596.96px;width:200px;text-align:center">02/09/2<span class="one"></span></div>
<div class="t d c" style="left:712.34px;top:596.96px;width:200px;text-align:center">e</div>
<div class="a" style="left:892px;top:604px;width:3px;height:2px;background:#6a6a6a"></div>
<div class="t d c" style="left:-68.16px;top:613.28px;width:200px;text-align:center">AG</div>
<div class="t d c" style="left:-21.16px;top:613.28px;width:200px;text-align:center">54</div>
<div class="t d l" style="left:104.00px;top:613.28px">Aging Tank 54</div>
<div class="t d r" style="left:190.28px;top:613.28px;width:100px;text-align:right">45,7<span class="one"></span>8.00</div>
<div class="t d c" style="left:225.54px;top:613.28px;width:200px;text-align:center">R</div>
<div class="t d l" style="left:354.50px;top:613.28px">00952<span class="one"></span>-54</div>
<div class="t d c" style="left:372.74px;top:613.28px;width:200px;text-align:center">952<span class="one"></span></div>
<div class="t d c" style="left:442.74px;top:613.28px;width:200px;text-align:center">04/27/2<span class="one"></span></div>
<div class="t d c" style="left:503.04px;top:613.28px;width:200px;text-align:center"><span class="one"></span></div>
<div class="t d c" style="left:564.04px;top:613.28px;width:200px;text-align:center">9,52<span class="one"></span></div>
<div class="t d c" style="left:638.84px;top:613.28px;width:200px;text-align:center">04/27/2<span class="one"></span></div>
<div class="t d c" style="left:712.34px;top:613.28px;width:200px;text-align:center">78<span class="one"></span>6</div>
<div class="t d r" style="left:814.18px;top:613.28px;width:100px;text-align:right">45,7<span class="one"></span>8.00</div>
<div class="t d c" style="left:-68.16px;top:629.60px;width:200px;text-align:center">AG</div>
<div class="t d c" style="left:-21.16px;top:629.60px;width:200px;text-align:center">55</div>
<div class="t d l" style="left:104.00px;top:629.60px">Aging Tank 55</div>
<div class="t d r" style="left:190.28px;top:629.60px;width:100px;text-align:right">45,625.00</div>
<div class="t d c" style="left:225.54px;top:629.60px;width:200px;text-align:center">R</div>
<div class="t d l" style="left:354.50px;top:629.60px">009545-55</div>
<div class="t d c" style="left:372.74px;top:629.60px;width:200px;text-align:center">9545</div>
<div class="t d c" style="left:442.74px;top:629.60px;width:200px;text-align:center">04/30/2<span class="one"></span></div>
<div class="t d c" style="left:503.04px;top:629.60px;width:200px;text-align:center"><span class="one"></span></div>
<div class="t d c" style="left:564.04px;top:629.60px;width:200px;text-align:center">9,545</div>
<div class="t d c" style="left:638.84px;top:629.60px;width:200px;text-align:center">04/30/2<span class="one"></span></div>
<div class="t d c" style="left:712.34px;top:629.60px;width:200px;text-align:center">7809</div>
<div class="t d r" style="left:814.18px;top:629.60px;width:100px;text-align:right">45,625.00</div>
<div class="a" style="left:918px;top:0;width:3px;height:647px;background:#2e2e2e"></div>
<div class="a" style="left:0;top:645px;width:921px;height:2px;background:#000"></div>
</div></body></html>
